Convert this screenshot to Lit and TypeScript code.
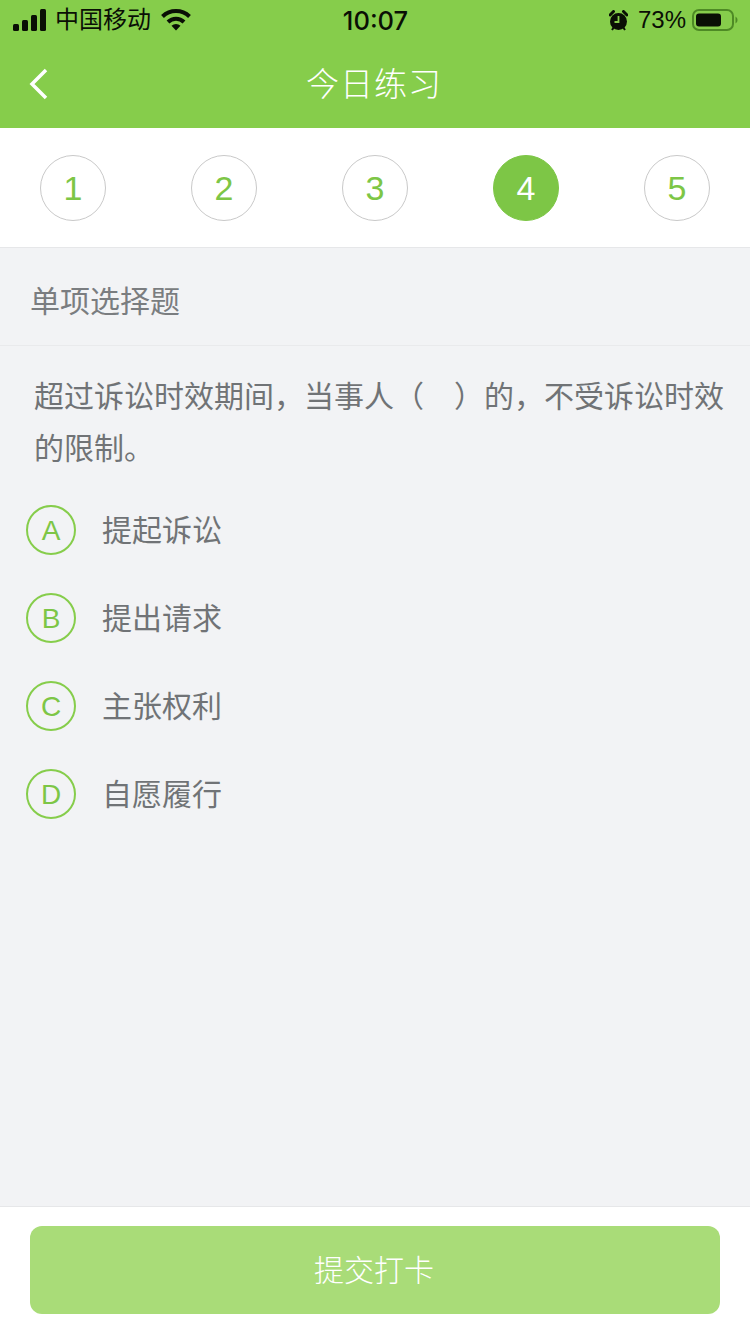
import { css, html, LitElement } from 'lit';
import { customElement } from 'lit/decorators.js';

const steps = ['1', '2', '3', '4', '5'];
const activeStep = '4';

const options = [
  { key: 'A', label: '提起诉讼' },
  { key: 'B', label: '提出请求' },
  { key: 'C', label: '主张权利' },
  { key: 'D', label: '自愿履行' },
];

@customElement('app-root')
export class AppRoot extends LitElement {
  static styles = css`
    :host {
      display: flex;
      flex-direction: column;
      width: 750px;
      height: 1334px;
      overflow: hidden;
      background: #f2f3f5;
      color: #707376;
      font-family: 'Liberation Sans', 'Noto Sans CJK SC', sans-serif;
    }

    .top {
      background: #86cd4b;
      height: 128px;
      flex: none;
    }

    .status {
      display: grid;
      grid-template-columns: 1fr auto 1fr;
      align-items: center;
      height: 40px;
      padding: 0 12px 0 13px;
      color: #0a0f05;
    }

    .status-left,
    .status-right {
      display: flex;
      align-items: center;
    }

    .status-left {
      gap: 8px;
    }

    .status-right {
      justify-content: flex-end;
    }

    .time {
      font-size: 25.5px;
      font-weight: 500;
      font-family: Inter, 'Liberation Sans', sans-serif;
    }

    .carrier {
      font-size: 24px;
      line-height: 36px;
      padding-bottom: 4px;
      font-family: 'Noto Sans CJK SC', sans-serif;
    }

    .wifi {
      margin-left: 2px;
    }

    .percent {
      margin: 0 6px 0 10px;
      font-size: 24px;
    }

    .nav {
      display: flex;
      align-items: center;
      justify-content: center;
      position: relative;
      height: 88px;
    }

    .back {
      position: absolute;
      left: 28px;
      top: 28px;
    }

    .title {
      color: #fff;
      font-size: 33px;
      font-weight: 300;
      letter-spacing: 1px;
      font-family: 'Noto Sans CJK SC', sans-serif;
      padding: 0 2px 4px 0;
    }

    .steps {
      display: flex;
      justify-content: space-between;
      flex: none;
      height: 120px;
      padding: 27px 40px 0;
      box-sizing: border-box;
      background: #fff;
      border-bottom: 1px solid #e6e7e9;
    }

    .step {
      display: flex;
      align-items: center;
      justify-content: center;
      box-sizing: border-box;
      width: 66px;
      height: 66px;
      border: 1px solid #c9c9c9;
      border-radius: 50%;
      color: #7dc646;
      font-size: 34px;
    }

    .step.active {
      border-color: #7dc646;
      background: #7dc646;
      color: #fff;
    }

    .section {
      flex: none;
      height: 98px;
      box-sizing: border-box;
      display: flex;
      align-items: center;
      padding: 5px 31px 0 30px;
      border-bottom: 1px solid #e9eaec;
      color: #7a7d80;
      font-size: 30px;
      font-family: 'Noto Sans CJK SC', sans-serif;
    }

    .body {
      flex: 1;
    }

    .question {
      margin: 0;
      padding: 22px 20px 0 34px;
      font-size: 30px;
      line-height: 52px;
      font-family: 'Noto Sans CJK SC', sans-serif;
    }

    .options {
      display: flex;
      flex-direction: column;
      padding: 14px 0 0 26px;
    }

    .option {
      display: flex;
      align-items: center;
      gap: 26px;
      height: 88px;
      font-size: 30px;
      font-family: 'Noto Sans CJK SC', sans-serif;
    }

    .label {
      padding-bottom: 4px;
    }

    .key {
      display: flex;
      align-items: center;
      justify-content: center;
      box-sizing: border-box;
      width: 50px;
      height: 50px;
      padding-top: 2px;
      border: 2px solid #86cd4b;
      border-radius: 50%;
      color: #7dc646;
      font-size: 28px;
      font-family: 'Liberation Sans', sans-serif;
    }

    .footer {
      flex: none;
      height: 128px;
      box-sizing: border-box;
      padding: 19px 30px 0;
      background: #fff;
      border-top: 1px solid #e6e7e9;
    }

    .submit {
      display: flex;
      align-items: center;
      justify-content: center;
      height: 88px;
      padding: 0 2px 4px 0;
      box-sizing: border-box;
      border-radius: 12px;
      background: #a9dc78;
      color: #fff;
      font-size: 30px;
      font-family: 'Noto Sans CJK SC', sans-serif;
      font-weight: 300;
    }
  `;

  render() {
    return html`
      <div class="top">
        <div class="status">
          <div class="status-left">
            <svg width="34" height="22" viewBox="0 0 34 22" fill="#0a0f05">
              <rect x="0" y="15" width="6" height="7" rx="1.5"></rect>
              <rect x="9" y="11" width="6" height="11" rx="1.5"></rect>
              <rect x="18" y="6" width="6" height="16" rx="1.5"></rect>
              <rect x="27" y="0" width="6" height="22" rx="1.5"></rect>
            </svg>
            <span class="carrier">中国移动</span>
            <svg class="wifi" width="30" height="22" viewBox="0 0 30 22" fill="none" stroke="#0a0f05" stroke-width="4">
              <path d="M1.5 7.5a19.500 19.500 0 0 1 27 0"></path>
              <path d="M7 13a11.500 11.500 0 0 1 16 0"></path>
              <path d="M15 21.500l-4.500-4.800a6.500 6.500 0 0 1 9 0z" fill="#0a0f05" stroke="none"></path>
            </svg>
          </div>
          <span class="time">10:07</span>
          <div class="status-right">
            <svg width="19" height="21" viewBox="0 0 19 21">
              <circle cx="9.500" cy="11.500" r="8.500" fill="#0a0f05"></circle>
              <path d="M1 5l3.500-3.500M18 5l-3.500-3.500" stroke="#0a0f05" stroke-width="3" stroke-linecap="round"></path>
              <path d="M3 20l2-3M16 20l-2-3" stroke="#0a0f05" stroke-width="2"></path>
              <path d="M9.500 6v6H5.500" fill="none" stroke="#86cd4b" stroke-width="1.800"></path>
            </svg>
            <span class="percent">73%</span>
            <svg width="46" height="22" viewBox="0 0 46 22">
              <rect x="1" y="1" width="40" height="20" rx="6" fill="none" stroke="#4e8a25" stroke-width="2"></rect>
              <rect x="4" y="4.500" width="25" height="13" rx="3" fill="#0a0f05"></rect>
              <path d="M43.500 7.500a4 4 0 0 1 0 7z" fill="#4e8a25"></path>
            </svg>
          </div>
        </div>
        <div class="nav">
          <svg class="back" width="22" height="32" viewBox="0 0 22 32" fill="none" stroke="#fff" stroke-width="3.500">
            <path d="M18 2L4 16l14 14"></path>
          </svg>
          <span class="title">今日练习</span>
        </div>
      </div>
      <div class="steps">
        ${steps.map(
          (step) => html`<div class="step ${step === activeStep ? 'active' : ''}">${step}</div>`,
        )}
      </div>
      <div class="section">单项选择题</div>
      <div class="body">
        <p class="question">超过诉讼时效期间，当事人（　）的，不受诉讼时效的限制。</p>
        <div class="options">
          ${options.map(
            (option) => html`
              <div class="option">
                <span class="key">${option.key}</span>
                <span class="label">${option.label}</span>
              </div>
            `,
          )}
        </div>
      </div>
      <div class="footer">
        <div class="submit">提交打卡</div>
      </div>
    `;
  }
}
